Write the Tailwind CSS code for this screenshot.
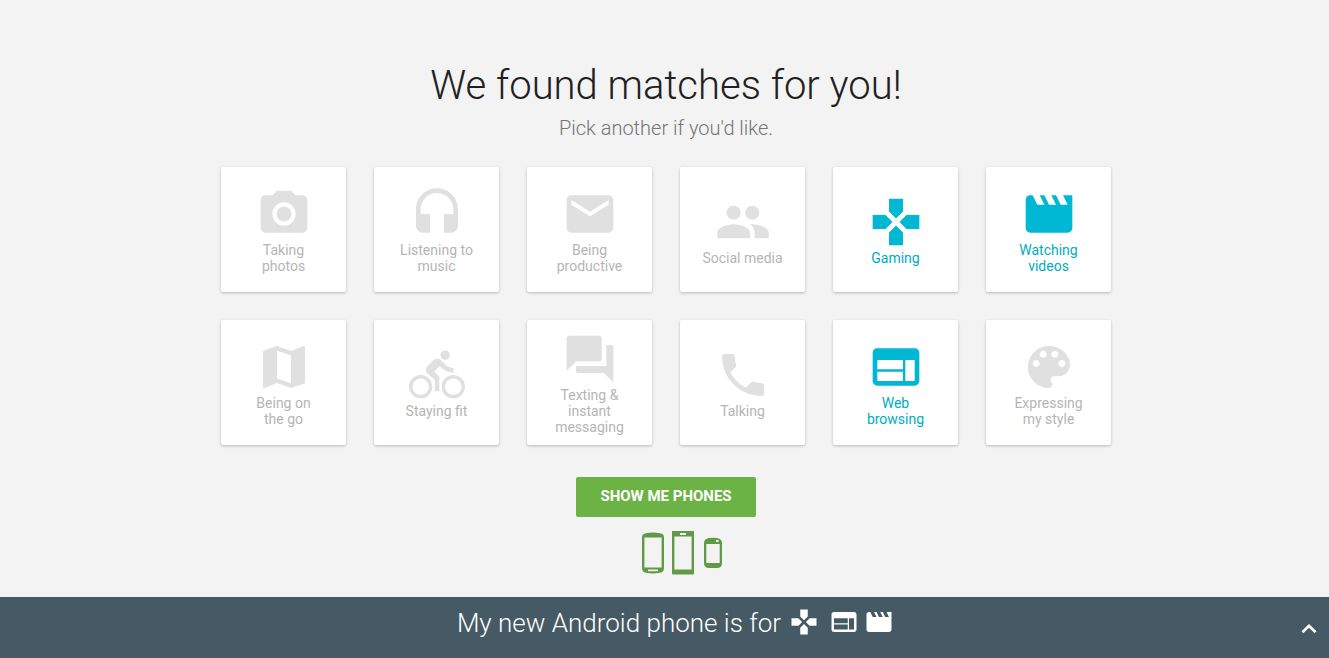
<!DOCTYPE html>
<html lang="en">
<head>
<meta charset="utf-8">
<meta name="viewport" content="width=device-width, initial-scale=1">
<title>We found matches for you!</title>
<script src="https://cdn.jsdelivr.net/npm/@tailwindcss/browser@4"></script>
</head>
<body class="flex min-h-screen flex-col bg-[#f3f3f3] font-['Roboto',sans-serif]">
<svg class="hidden" aria-hidden="true">
  <symbol id="gamepad" viewBox="0 0 24 24"><path d="M15 7.500V2H9v5.500l3 3 3-3zM7.500 9H2v6h5.500l3-3-3-3zM9 16.500V22h6v-5.500l-3-3-3 3zM16.500 9l-3 3 3 3H22V9h-5.500z"/></symbol>
  <symbol id="movie" viewBox="0 0 24 24"><path d="M18 4l2 4h-3l-2-4h-2l2 4h-3l-2-4H8l2 4H7L5 4H4c-1.100 0-1.990.9-1.990 2L2 18c0 1.100.9 2 2 2h16c1.100 0 2-.9 2-2V4h-4z"/></symbol>
  <symbol id="web" viewBox="0 0 24 24"><path d="M20 4H4c-1.100 0-1.990.9-1.990 2L2 18c0 1.100.9 2 2 2h16c1.100 0 2-.9 2-2V6c0-1.100-.9-2-2-2zm-5 14H4v-4h11v4zm0-5H4V9h11v4zm5 5h-4V9h4v9z"/></symbol>
</svg>

<main class="flex flex-1 flex-col items-center pt-15 pb-5 pl-[3px]">
  <h1 class="text-center text-[40px] leading-[52px] font-light text-[#212121]">We found matches for you!</h1>
  <p class="mt-0.5 text-center text-xl leading-7 font-light text-[#757575]">Pick another if you'd like.</p>

  <div class="mt-[25px] grid grid-cols-[repeat(6,125px)] gap-7 text-sm leading-4 font-normal text-[#b5b5b5]">
    <button type="button" aria-pressed="false" class="flex aspect-square flex-col items-center justify-center rounded-xs bg-white px-5 shadow-[0_1px_3px_rgba(0,0,0,0.25)]">
      <svg class="size-14 shrink-0 fill-[#e0e0e0]" viewBox="0 0 24 24" aria-hidden="true"><circle cx="12" cy="12" r="3.200"/><path d="M9 2L7.170 4H4c-1.100 0-2 .9-2 2v12c0 1.100.9 2 2 2h16c1.100 0 2-.9 2-2V6c0-1.100-.9-2-2-2h-3.170L15 2H9zm3 15c-2.760 0-5-2.240-5-5s2.240-5 5-5 5 2.240 5 5-2.240 5-5 5z"/></svg>
      <span>Taking<br>photos</span>
    </button>
    <button type="button" aria-pressed="false" class="flex aspect-square flex-col items-center justify-center rounded-xs bg-white px-5 shadow-[0_1px_3px_rgba(0,0,0,0.25)]">
      <svg class="size-14 shrink-0 fill-[#e0e0e0]" viewBox="0 0 24 24" aria-hidden="true"><path d="M12 1c-4.970 0-9 4.030-9 9v7c0 1.660 1.340 3 3 3h3v-8H5v-2c0-3.870 3.130-7 7-7s7 3.130 7 7v2h-4v8h3c1.660 0 3-1.340 3-3v-7c0-4.970-4.030-9-9-9z"/></svg>
      <span>Listening to<br>music</span>
    </button>
    <button type="button" aria-pressed="false" class="flex aspect-square flex-col items-center justify-center rounded-xs bg-white px-5 shadow-[0_1px_3px_rgba(0,0,0,0.25)]">
      <svg class="size-14 shrink-0 fill-[#e0e0e0]" viewBox="0 0 24 24" aria-hidden="true"><path d="M20 4H4c-1.100 0-1.990.9-1.990 2L2 18c0 1.100.9 2 2 2h16c1.100 0 2-.9 2-2V6c0-1.100-.9-2-2-2zm0 4l-8 5-8-5V6l8 5 8-5v2z"/></svg>
      <span>Being<br>productive</span>
    </button>
    <button type="button" aria-pressed="false" class="flex aspect-square flex-col items-center justify-center rounded-xs bg-white px-5 shadow-[0_1px_3px_rgba(0,0,0,0.25)]">
      <svg class="size-14 shrink-0 fill-[#e0e0e0]" viewBox="0 0 24 24" aria-hidden="true"><path d="M16 11c1.660 0 2.990-1.340 2.990-3S17.660 5 16 5c-1.660 0-3 1.340-3 3s1.340 3 3 3zm-8 0c1.660 0 2.990-1.340 2.990-3S9.660 5 8 5C6.340 5 5 6.340 5 8s1.340 3 3 3zm0 2c-2.330 0-7 1.170-7 3.500V19h14v-2.500c0-2.330-4.670-3.500-7-3.500zm8 0c-.29 0-.62.02-.97.05 1.160.84 1.970 1.970 1.970 3.450V19h6v-2.500c0-2.330-4.670-3.500-7-3.500z"/></svg>
      <span class="whitespace-nowrap">Social media</span>
    </button>
    <button type="button" aria-pressed="true" class="flex aspect-square flex-col items-center justify-center rounded-xs bg-white px-5 text-[#00acc1] shadow-[0_1px_3px_rgba(0,0,0,0.25)]">
      <svg class="size-14 shrink-0 fill-[#00b8d4]" aria-hidden="true"><use href="#gamepad"/></svg>
      <span>Gaming</span>
    </button>
    <button type="button" aria-pressed="true" class="flex aspect-square flex-col items-center justify-center rounded-xs bg-white px-5 text-[#00acc1] shadow-[0_1px_3px_rgba(0,0,0,0.25)]">
      <svg class="size-14 shrink-0 fill-[#00b8d4]" aria-hidden="true"><use href="#movie"/></svg>
      <span>Watching<br>videos</span>
    </button>
    <button type="button" aria-pressed="false" class="flex aspect-square flex-col items-center justify-center rounded-xs bg-white px-5 shadow-[0_1px_3px_rgba(0,0,0,0.25)]">
      <svg class="size-14 shrink-0 fill-[#e0e0e0]" viewBox="0 0 24 24" aria-hidden="true"><path d="M20.500 3l-.16.03L15 5.100 9 3 3.360 4.900c-.21.07-.36.25-.36.48V20.500c0 .28.22.5.5.5l.16-.03L9 18.900l6 2.100 5.640-1.900c.21-.07.36-.25.36-.48V3.500c0-.28-.22-.5-.5-.5zM15 19l-6-2.110V5l6 2.110V19z"/></svg>
      <span>Being on<br>the go</span>
    </button>
    <button type="button" aria-pressed="false" class="flex aspect-square flex-col items-center justify-center rounded-xs bg-white px-5 shadow-[0_1px_3px_rgba(0,0,0,0.25)]">
      <svg class="size-14 shrink-0 fill-[#e0e0e0]" viewBox="0 0 24 24" aria-hidden="true"><path d="M15.500 5.500c1.100 0 2-.9 2-2s-.9-2-2-2-2 .9-2 2 .9 2 2 2zM5 12c-2.800 0-5 2.200-5 5s2.200 5 5 5 5-2.200 5-5-2.200-5-5-5zm0 8.500c-1.900 0-3.500-1.600-3.500-3.500s1.600-3.500 3.500-3.500 3.500 1.600 3.500 3.500-1.600 3.500-3.500 3.500zm5.800-10l2.400-2.400.8.8c1.300 1.300 3 2.100 5.100 2.100V9c-1.500 0-2.700-.6-3.600-1.500l-1.900-1.900c-.5-.4-1-.6-1.600-.6s-1.100.2-1.400.6L7.800 8.400c-.4.4-.6.9-.6 1.400 0 .6.2 1.100.6 1.400L11 14v5h2v-6.200l-2.200-2.300zM19 12c-2.800 0-5 2.200-5 5s2.200 5 5 5 5-2.200 5-5-2.200-5-5-5zm0 8.500c-1.900 0-3.500-1.600-3.500-3.500s1.600-3.500 3.500-3.500 3.500 1.600 3.500 3.500-1.600 3.500-3.500 3.500z"/></svg>
      <span>Staying fit</span>
    </button>
    <button type="button" aria-pressed="false" class="flex aspect-square flex-col items-center justify-center rounded-xs bg-white px-5 shadow-[0_1px_3px_rgba(0,0,0,0.25)]">
      <svg class="size-14 shrink-0 fill-[#e0e0e0]" viewBox="0 0 24 24" aria-hidden="true"><path d="M21 6h-2v9H6v2c0 .55.45 1 1 1h11l4 4V7c0-.55-.45-1-1-1zm-4 6V3c0-.55-.45-1-1-1H3c-.55 0-1 .45-1 1v14l4-4h10c.55 0 1-.45 1-1z"/></svg>
      <span>Texting &amp;<br>instant<br>messaging</span>
    </button>
    <button type="button" aria-pressed="false" class="flex aspect-square flex-col items-center justify-center rounded-xs bg-white px-5 shadow-[0_1px_3px_rgba(0,0,0,0.25)]">
      <svg class="size-14 shrink-0 fill-[#e0e0e0]" viewBox="0 0 24 24" aria-hidden="true"><path d="M6.620 10.790c1.440 2.830 3.760 5.140 6.590 6.590l2.200-2.200c.27-.27.67-.36 1.020-.24 1.120.37 2.330.57 3.570.57.55 0 1 .45 1 1V20c0 .55-.45 1-1 1-9.390 0-17-7.610-17-17 0-.55.45-1 1-1h3.500c.55 0 1 .45 1 1 0 1.250.2 2.450.57 3.570.11.35.03.74-.25 1.020l-2.200 2.200z"/></svg>
      <span>Talking</span>
    </button>
    <button type="button" aria-pressed="true" class="flex aspect-square flex-col items-center justify-center rounded-xs bg-white px-5 text-[#00acc1] shadow-[0_1px_3px_rgba(0,0,0,0.25)]">
      <svg class="size-14 shrink-0 fill-[#00b8d4]" aria-hidden="true"><use href="#web"/></svg>
      <span>Web<br>browsing</span>
    </button>
    <button type="button" aria-pressed="false" class="flex aspect-square flex-col items-center justify-center rounded-xs bg-white px-5 shadow-[0_1px_3px_rgba(0,0,0,0.25)]">
      <svg class="size-14 shrink-0 fill-[#e0e0e0]" viewBox="0 0 24 24" aria-hidden="true"><path d="M12 3c-4.970 0-9 4.030-9 9s4.030 9 9 9c.83 0 1.500-.67 1.500-1.500 0-.39-.15-.74-.39-1.010-.23-.26-.38-.61-.38-.99 0-.83.67-1.500 1.500-1.500H16c2.760 0 5-2.240 5-5 0-4.420-4.030-8-9-8zm-5.500 9c-.83 0-1.500-.67-1.500-1.500S5.670 9 6.500 9 8 9.670 8 10.500 7.330 12 6.500 12zm3-4C8.670 8 8 7.330 8 6.500S8.670 5 9.500 5s1.500.67 1.500 1.500S10.330 8 9.500 8zm5 0c-.83 0-1.500-.67-1.500-1.500S13.670 5 14.500 5s1.500.67 1.500 1.500S15.330 8 14.500 8zm3 4c-.83 0-1.500-.67-1.500-1.500S16.670 9 17.500 9s1.500.67 1.500 1.500-.67 1.500-1.500 1.500z"/></svg>
      <span>Expressing<br>my style</span>
    </button>
  </div>

  <button type="button" class="mt-8 h-10 w-45 rounded-xs bg-[#6ab344] pb-0.5 text-[15px] font-bold text-white">SHOW ME PHONES</button>

  <svg class="mt-3.5 ml-8 h-11 w-20" viewBox="0 0 80 44" fill="#5f9b46" aria-hidden="true">
    <path fill-rule="evenodd" d="M4 2.200Q11 .8 18 2.200Q22 3 22 6V37Q22 41 18 41.800Q11 43.200 4 41.800Q0 41 0 37V6Q0 3 4 2.200ZM2.400 6.500V36.500H19.600V6.500ZM6 38.500V40.300H16V38.500Z"/>
    <path fill-rule="evenodd" d="M30 0H52V42.500Q52 43.500 51 43.500H31Q30 43.500 30 42.500ZM32.400 5.500V38.500H49.600V5.500ZM38 2V4H44V2Z"/>
    <path fill-rule="evenodd" d="M67 7Q71 6.500 75 7Q80 8 80 12V32Q80 37 75 37H67Q62 37 62 32V12Q62 8 67 7ZM64.300 13V32H77.700V13ZM74 9V11H76.500V9Z"/>
  </svg>
</main>

<footer class="relative flex h-[61px] justify-center bg-[#455a64] pt-2 pl-[22px] text-white">
  <div class="flex h-9 items-center">
    <p class="text-[26px] leading-9 font-light">My new Android phone is for</p>
    <svg class="mb-0.5 ml-2 size-[30px] fill-white" aria-hidden="true"><use href="#gamepad"/></svg>
    <svg class="mb-0.5 ml-2.5 size-[30px] fill-white" aria-hidden="true"><use href="#web"/></svg>
    <svg class="mb-0.5 ml-[5px] size-[30px] fill-white" aria-hidden="true"><use href="#movie"/></svg>
  </div>
  <button type="button" aria-label="Expand" class="absolute right-2 bottom-4.5 flex size-6 items-center justify-center">
    <svg class="size-6 fill-white" viewBox="0 0 24 24" aria-hidden="true"><path d="M12 8l-7.500 7.300 1.900 1.900L12 11.800l5.600 5.400 1.900-1.900z"/></svg>
  </button>
</footer>
</body>
</html>
